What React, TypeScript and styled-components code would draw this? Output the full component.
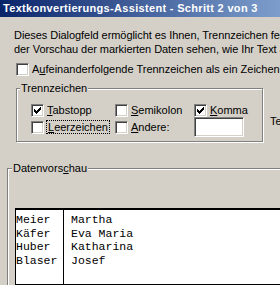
import React from "react";
import styled, { createGlobalStyle } from "styled-components";

const Global = createGlobalStyle`
  html, body { margin: 0; padding: 0; overflow: hidden; background: #D4D0C8; }
  body { width: 280px; height: 285px; }
`;

const Dialog = styled.div`
  width: 520px;
  height: 285px;
  background: #D4D0C8;
  font-family: "Liberation Sans", Tahoma, Arial, sans-serif;
  font-size: 11px;
  color: #000;
  display: flex;
  flex-direction: column;
  overflow: hidden;
`;

const TitleBar = styled.div`
  height: 17px;
  flex-shrink: 0;
  background: linear-gradient(to right, #0A246A 0px, #A6CAF0 380px);
  color: #fff;
  font-weight: bold;
  font-size: 11px;
  letter-spacing: 0.32px;
  line-height: 17px;
  padding-left: 3px;
  white-space: nowrap;
`;

const Body = styled.div`
  padding: 11px 0 0 7px;
  display: flex;
  flex-direction: column;
`;

const Description = styled.div`
  margin-left: 7px;
  line-height: 14px;
  letter-spacing: -0.06px;
  white-space: nowrap;
`;

const CheckRow = styled.div`
  margin: 7px 0 0 9px;
  display: flex;
`;

const Check = styled.label`
  display: flex;
  align-items: center;
  gap: 3px;
  line-height: 13px;
  white-space: nowrap;
`;

const Box = styled.span`
  box-sizing: border-box;
  width: 13px;
  height: 13px;
  flex-shrink: 0;
  background: #fff;
  border: 1px solid;
  border-color: #808080 #fff #fff #808080;
  box-shadow: inset 1px 1px #404040, inset -1px -1px #D4D0C8;
  position: relative;
`;

const CheckMark = styled.svg`
  position: absolute;
  left: -1px;
  top: -1px;
  width: 13px;
  height: 13px;
  shape-rendering: crispEdges;
`;

const Key = styled.span`
  text-decoration: underline;
`;

const Focus = styled.span`
  outline: 1px dotted #000;
  padding: 0 1px;
`;

const GroupRow = styled.div`
  margin: 6px 0 0 9px;
  display: flex;
  align-items: flex-start;
`;

const Group = styled.fieldset<{ $w: number; $h: number }>`
  box-sizing: border-box;
  width: ${(p) => p.$w}px;
  height: ${(p) => p.$h}px;
  margin: 0;
  padding: 0;
  border: 1px solid #808080;
  box-shadow: inset 1px 1px #fff, 1px 1px #fff;
  min-width: 0;
`;

const Legend = styled.legend<{ $ml: number }>`
  margin-left: ${(p) => p.$ml}px;
  padding: 0 1px;
  line-height: 13px;
  font-size: 11px;
  background: #D4D0C8;
  white-space: nowrap;
`;

const SepGrid = styled.div`
  display: grid;
  grid-template-columns: 84px 79px 1fr;
  grid-template-rows: 14px 20px;
  align-items: center;
  padding: 8px 0 0 14px;
`;

const TextInput = styled.span`
  box-sizing: border-box;
  display: block;
  width: 50px;
  height: 20px;
  background: #fff;
  border: 1px solid;
  border-color: #808080 #fff #fff #808080;
  box-shadow: inset 1px 1px #404040, inset -1px -1px #D4D0C8;
`;

const SideLabel = styled.div`
  margin: 33px 0 0 7px;
  line-height: 13px;
  white-space: nowrap;
`;

const PreviewGroup = styled(Group)`
  margin-top: 20px;
`;

const PreviewInner = styled.div`
  padding: 33px 0 0 7px;
`;

const Table = styled.div`
  display: flex;
  height: 77px;
  box-sizing: border-box;
  background: #fff;
  border: 1px solid #000;
  border-top-width: 2px;
  font-family: "Liberation Mono", "Courier New", monospace;
  font-size: 11.5px;
  line-height: 13.6px;
`;

const Column = styled.div<{ $w?: number; $pl: number; $sep?: boolean }>`
  ${(p) => (p.$w ? `width: ${p.$w}px; flex-shrink: 0;` : "flex: 1;")}
  padding: 3px 0 0 ${(p) => p.$pl}px;
  box-sizing: border-box;
  border-right: ${(p) => (p.$sep ? "1px solid #000" : "none")};
  white-space: pre;
`;

const Tick = () => (
  <CheckMark viewBox="0 0 13 13">
    <path
      d="M3 5h1v3H3z M4 6h1v3H4z M5 7h1v3H5z M6 6h1v3H6z M7 5h1v3H7z M8 4h1v3H8z M9 3h1v3H9z"
      fill="#000"
    />
  </CheckMark>
);

const CheckBox = ({ checked, children }: { checked?: boolean; children: React.ReactNode }) => (
  <Check>
    <Box>{checked && <Tick />}</Box>
    <span>{children}</span>
  </Check>
);

export default function App() {
  const last = ["Meier", "Käfer", "Huber", "Blaser"];
  const first = ["Martha", "Eva Maria", "Katharina", "Josef"];
  return (
    <>
      <Global />
      <Dialog>
        <TitleBar>Textkonvertierungs-Assistent - Schritt 2 von 3</TitleBar>
        <Body>
          <Description>
            Dieses Dialogfeld ermöglicht es Ihnen, Trennzeichen festzulegen, die in Ihren Daten enthalten sind.
            <br />
            der Vorschau der markierten Daten sehen, wie Ihr Text angepasst wird.
          </Description>
          <CheckRow>
            <CheckBox>
              A<Key>u</Key>feinanderfolgende Trennzeichen als ein Zeichen behandeln
            </CheckBox>
          </CheckRow>
          <GroupRow>
            <Group $w={247} $h={60}>
              <Legend $ml={3}>Trennzeichen</Legend>
              <SepGrid>
                <CheckBox checked>
                  <Key>T</Key>abstopp
                </CheckBox>
                <CheckBox>
                  <Key>S</Key>emikolon
                </CheckBox>
                <CheckBox checked>
                  <Key>K</Key>omma
                </CheckBox>
                <CheckBox>
                  <Focus>
                    <Key>L</Key>eerzeichen
                  </Focus>
                </CheckBox>
                <CheckBox>
                  <Key>A</Key>ndere:
                </CheckBox>
                <TextInput />
              </SepGrid>
            </Group>
            <SideLabel>Textqualifizierer:</SideLabel>
          </GroupRow>
          <PreviewGroup $w={480} $h={200}>
            <Legend $ml={4}>
              Datenvors<Key>c</Key>hau
            </Legend>
            <PreviewInner>
              <Table>
                <Column $w={48} $pl={0} $sep>
                  {last.join("\n")}
                </Column>
                <Column $pl={7}>{first.join("\n")}</Column>
              </Table>
            </PreviewInner>
          </PreviewGroup>
        </Body>
      </Dialog>
    </>
  );
}
